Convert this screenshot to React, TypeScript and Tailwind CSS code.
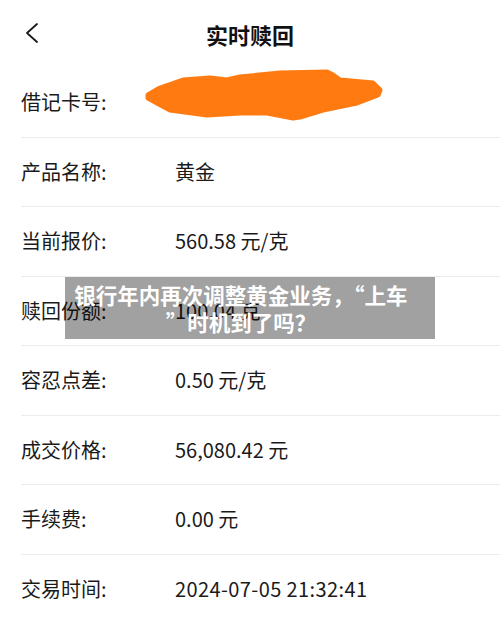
import React from "react";

const rows: { label: string; value: string; wide?: boolean }[] = [
  { label: "借记卡号:", value: "" },
  { label: "产品名称:", value: "黄金" },
  { label: "当前报价:", value: "560.58 元/克" },
  { label: "赎回份额:", value: "100.04 克" },
  { label: "容忍点差:", value: "0.50 元/克" },
  { label: "成交价格:", value: "56,080.42 元" },
  { label: "手续费:", value: "0.00 元" },
  { label: "交易时间:", value: "2024-07-05 21:32:41", wide: true },
];

const font = { fontFamily: '"Noto Sans CJK SC", "Noto Sans", sans-serif' };

// orange marker covering the card number
const Scribble = () => (
  <svg
    className="absolute left-[119px] top-[-8px]"
    width={250}
    height={70}
    viewBox="140 60 250 70"
  >
    <path
      d="M148 95 L160 88 L183 80 L210 78 L227 80 L240 77 L280 73 L327 72 L333 75 L340 80 L373 83 L380 90 L378 95 L357 103 L323 110 L300 117 L293 118 L267 113 L240 113 L207 115 L170 110 L157 103 L148 98 Z"
      fill="#ff7a10"
      stroke="#ff7a10"
      strokeWidth={5}
      strokeLinejoin="round"
    />
  </svg>
);

export default function App() {
  return (
    <div className="relative h-[618px] w-[500px] overflow-hidden bg-white text-[#1a1a1a]" style={font}>
      <div className="relative flex h-[68px] items-center justify-center">
        <svg className="absolute left-[24px] top-[22px]" width={16} height={22} viewBox="0 0 16 22">
          <path d="M13 2 L3 11 L13 20" fill="none" stroke="#1a1a1a" strokeWidth={1.8} strokeLinecap="round" strokeLinejoin="round" />
        </svg>
        <span className="text-[22px] font-semibold text-[#111]">实时赎回</span>
      </div>

      <div className="flex flex-col">
        {rows.map((r, i) => (
          <div key={i} className="relative ml-[21px] flex h-[69.5px] items-center border-b border-[#ececec]">
            <span className="w-[154px] text-[20px]">{r.label}</span>
            <span className={r.wide ? "text-[20px] tracking-[0.4px]" : "text-[20px]"}>{r.value}</span>
            {i === 0 && <Scribble />}
          </div>
        ))}
      </div>

      <div className="absolute left-[65px] top-[277px] flex h-[62px] w-[370px] items-center justify-center bg-black/[0.37] pr-[18px]">
        <p className="text-center text-[21.5px] font-bold leading-[27px] text-white">
          银行年内再次调整黄金业务，“上车
          <br />
          ”时机到了吗？
        </p>
      </div>
    </div>
  );
}
